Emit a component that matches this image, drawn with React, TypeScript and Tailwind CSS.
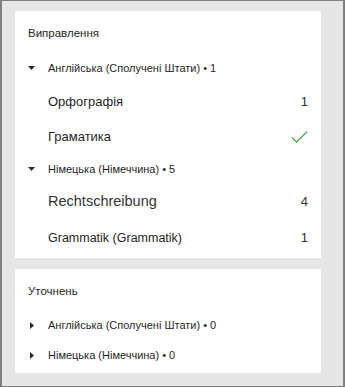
import React from 'react';

const font = { fontFamily: '"Liberation Sans", Arial, sans-serif' };

function DownCaret() {
  return (
    <svg width="7" height="4" viewBox="0 0 7 4" className="shrink-0">
      <path d="M0 0 H7 L3.5 4 Z" fill="#2b2b2b" />
    </svg>
  );
}

function RightCaret() {
  return (
    <svg width="4" height="7" viewBox="0 0 4 7" className="shrink-0">
      <path d="M0 0 V7 L4 3.5 Z" fill="#2b2b2b" />
    </svg>
  );
}

function Check() {
  return (
    <svg width="17" height="12" viewBox="0 0 17 12">
      <path d="M1 6.5 L5.5 11 L16 0.8" fill="none" stroke="#4caf50" strokeWidth="1.4" />
    </svg>
  );
}

export default function App() {
  return (
    <div
      className="w-[345px] h-[387px] border-x-2 border-y border-[#7f7f7f] bg-[#e6e6e6] pl-[13px] pr-[22px] pt-[10px] flex flex-col gap-[11px]"
      style={font}
    >
      {/* Виправлення */}
      <div className="h-[247px] bg-white pt-[6px] pl-[13px] pr-[13px] text-[#1f1f1f]">
        <div className="h-[34px] flex items-center text-[11.5px]">Виправлення</div>
        <div className="h-[34px] flex items-center text-[11px]">
          <DownCaret />
          <span className="ml-[13px]">Англійська (Сполучені Штати) • 1</span>
        </div>
        <div className="h-[34px] flex items-center justify-between pl-[20px] text-[13px]">
          <span>Орфографія</span>
          <span className="text-[#333]">1</span>
        </div>
        <div className="h-[36px] flex items-center justify-between pl-[20px] text-[13px]">
          <span>Граматика</span>
          <Check />
        </div>
        <div className="h-[28px] flex items-center text-[11px]">
          <DownCaret />
          <span className="ml-[13px]">Німецька (Німеччина) • 5</span>
        </div>
        <div className="h-[38px] flex items-center justify-between pl-[20px] text-[14.5px] text-[#333]">
          <span>Rechtschreibung</span>
          <span className="text-[13px]">4</span>
        </div>
        <div className="h-[34px] flex items-center justify-between pl-[20px] text-[12.5px]">
          <span>Grammatik (Grammatik)</span>
          <span className="text-[13px] text-[#333]">1</span>
        </div>
      </div>

      {/* Уточнень */}
      <div className="h-[104px] bg-white pt-[6px] pl-[13px] pr-[13px] text-[#1f1f1f]">
        <div className="h-[34px] flex items-center text-[11.5px]">Уточнень</div>
        <div className="h-[32px] flex items-center text-[11px]">
          <div className="w-[7px] flex justify-center">
            <RightCaret />
          </div>
          <span className="ml-[13px]">Англійська (Сполучені Штати) • 0</span>
        </div>
        <div className="h-[28px] flex items-center text-[11px]">
          <div className="w-[7px] flex justify-center">
            <RightCaret />
          </div>
          <span className="ml-[13px]">Німецька (Німеччина) • 0</span>
        </div>
      </div>
    </div>
  );
}
